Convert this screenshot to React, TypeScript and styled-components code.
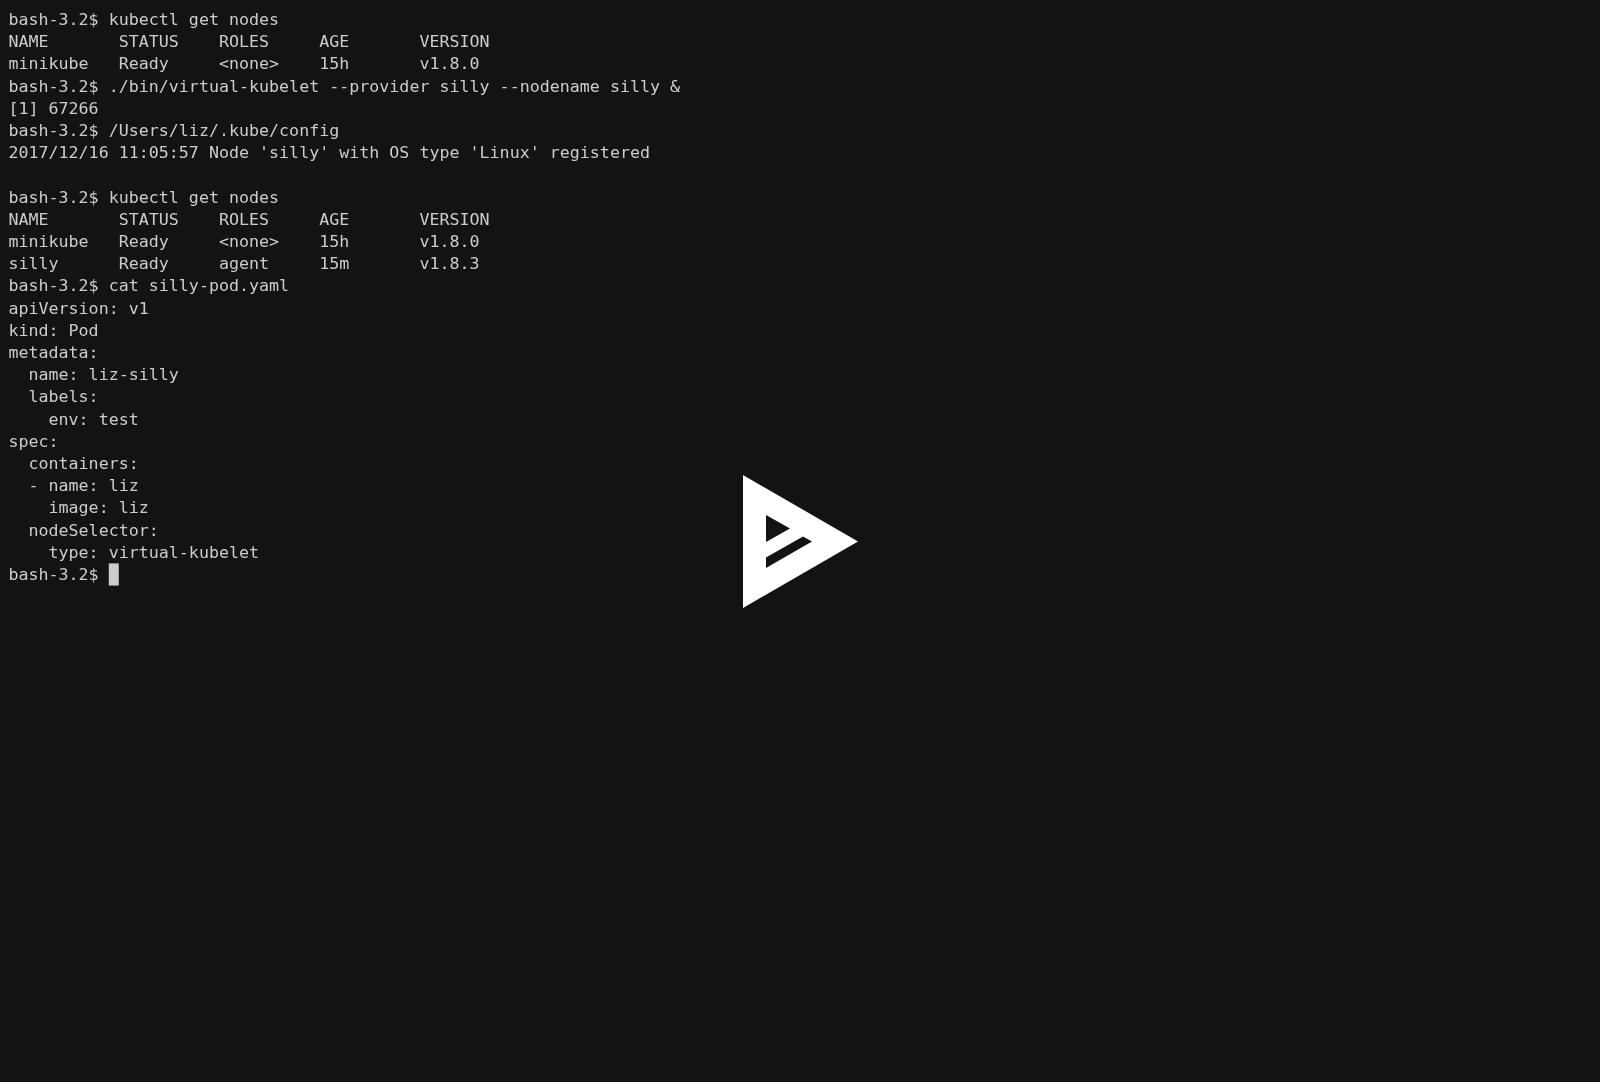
import React from 'react';
import styled, { createGlobalStyle } from 'styled-components';

const GlobalStyle = createGlobalStyle`
  html, body {
    margin: 0;
    padding: 0;
    height: 100%;
    background: #121314;
  }
  #root {
    height: 100%;
  }
`;

const Player = styled.div`
  position: relative;
  width: 100%;
  height: 1082px;
  overflow: hidden;
  background: #121314;
`;

const Terminal = styled.pre`
  margin: 0;
  padding: 7.4px 7.6px;
  font-family: 'DejaVu Sans Mono', 'Liberation Mono', monospace;
  font-size: 15px;
  line-height: 20px;
  color: #cccccc;
  transform: translateY(0.6px) scale(1.11);
  transform-origin: 0 0;
  will-change: transform;
`;

const Line = styled.div`
  height: 20px;
  white-space: pre;
`;

const Cursor = styled.span`
  display: inline-block;
  width: 1ch;
  height: 20px;
  vertical-align: top;
  background: #cccccc;
`;

const StartOverlay = styled.div`
  position: absolute;
  inset: 0;
  display: flex;
  align-items: center;
  justify-content: center;
`;

const LINES = [
  'bash-3.2$ kubectl get nodes',
  'NAME       STATUS    ROLES     AGE       VERSION',
  'minikube   Ready     <none>    15h       v1.8.0',
  'bash-3.2$ ./bin/virtual-kubelet --provider silly --nodename silly &',
  '[1] 67266',
  'bash-3.2$ /Users/liz/.kube/config',
  "2017/12/16 11:05:57 Node 'silly' with OS type 'Linux' registered",
  '',
  'bash-3.2$ kubectl get nodes',
  'NAME       STATUS    ROLES     AGE       VERSION',
  'minikube   Ready     <none>    15h       v1.8.0',
  'silly      Ready     agent     15m       v1.8.3',
  'bash-3.2$ cat silly-pod.yaml',
  'apiVersion: v1',
  'kind: Pod',
  'metadata:',
  '  name: liz-silly',
  '  labels:',
  '    env: test',
  'spec:',
  '  containers:',
  '  - name: liz',
  '    image: liz',
  '  nodeSelector:',
  '    type: virtual-kubelet',
];

function PlayLogo() {
  return (
    <svg width="115" height="133" viewBox="0 0 115 133" aria-hidden="true">
      <path
        fill="#ffffff"
        d="M0 0 L115 66.5 L0 133 Z M23 40 L23 67 L47 53.5 Z M60 61.5 L23 82.5 L23 93 L69 66.5 Z"
        fillRule="evenodd"
      />
    </svg>
  );
}

export default function App() {
  return (
    <>
      <GlobalStyle />
      <Player>
        <Terminal>
          {LINES.map((line, i) => (
            <Line key={i}>{line}</Line>
          ))}
          <Line>
            {'bash-3.2$ '}
            <Cursor />
          </Line>
        </Terminal>
        <StartOverlay>
          <PlayLogo />
        </StartOverlay>
      </Player>
    </>
  );
}
